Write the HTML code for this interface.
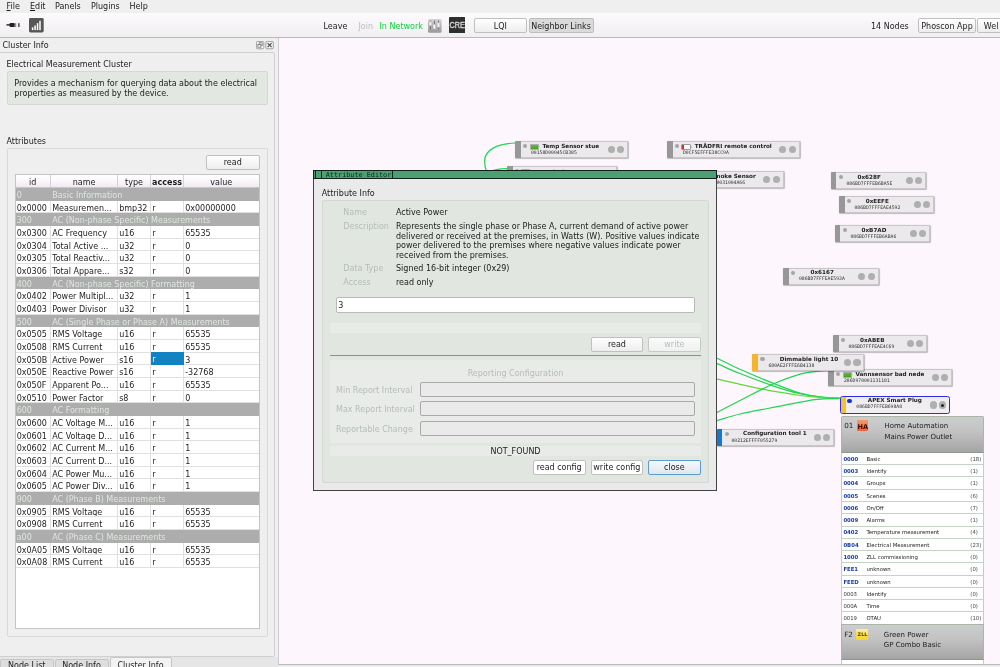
<!DOCTYPE html><html><head><meta charset="utf-8"><title>deCONZ</title><style>
*{box-sizing:border-box;margin:0;padding:0}
html,body{width:1000px;height:667px;overflow:hidden;background:#efefef}
body{font-family:"DejaVu Sans","Liberation Sans",sans-serif;font-size:8px;color:#1c1c1c;position:relative;line-height:11.4px}
.a{position:absolute;white-space:nowrap}
u{text-decoration-thickness:0.7px;text-underline-offset:1px}
.menubar{left:0;top:0;width:1000px;height:13px;background:#efefef}
.toolbar{left:0;top:13px;width:1000px;height:24.5px;background:linear-gradient(#fcfafc,#f1eef1);border-bottom:1px solid #b9b9b9}
.btn{border:1px solid #c0c0c0;border-radius:2px;background:linear-gradient(#ffffff,#ededed);text-align:center}
.canvas{left:278.3px;top:38px;width:722px;height:626.6px;background:#fdf7fd;overflow:hidden;border-left:1px solid #cfcacf}
.dock{left:0;top:38px;width:278.5px;height:629px;background:#efefef}
.gb{border:1px solid #d9d9d9;border-radius:2px}
.desc{background:#e2e7e2;border:1px solid #d2d9d2;border-radius:2px}
.tbl{background:#fff;border:1px solid #c4c4c4}
.row{left:0;width:244px;height:12.67px}
.grp{background:#adadad;color:#dde7dd}
.cell{top:0;height:12.67px;line-height:15.4px;padding-left:1.2px;border-right:1px solid #e0e0e0;border-bottom:1px solid #e0e0e0;overflow:hidden}
.hdr{background:linear-gradient(#ffffff,#fbf8fb 45%,#f0eaf0);text-align:center;padding-left:0;border-right:1px solid #d8d0d8;border-bottom:1px solid #c8c8c8}
.node{height:17.3px;background:#ebe9eb;border:1px solid #c9c7c9;border-radius:1.5px;box-shadow:0.5px 0.5px 1px rgba(0,0,0,.25)}
.node .bar{position:absolute;left:-1px;top:-1px;bottom:-1px;width:5.9px;background:#979797;border-radius:1px 0 0 1px}
.node .nm{position:absolute;top:-0.5px;font-weight:bold;font-size:5.67px;line-height:8px;color:#222;white-space:nowrap}
.node .mac{position:absolute;top:7.9px;font-family:"DejaVu Sans Mono","Liberation Mono",monospace;font-size:4.76px;line-height:6px;color:#333;white-space:nowrap}
.node .dot{position:absolute;width:4.2px;height:4.2px;border-radius:50%;background:#a7aaa7;left:7.1px;top:2px}
.node .c{position:absolute;width:7.1px;height:7.1px;border-radius:50%;background:#adb0ad;top:4.2px}
.cl{font-size:5.35px;line-height:13.6px}
</style></head><body><div id="root" class="a" style="left:0;top:0;width:1000px;height:667px;will-change:transform;filter:blur(0.5px)">
<div class="a menubar">
<span class="a" style="left:6.5px;top:1px"><u>F</u>ile</span>
<span class="a" style="left:30px;top:1px"><u>E</u>dit</span>
<span class="a" style="left:55px;top:1px">Panels</span>
<span class="a" style="left:91px;top:1px">Plugins</span>
<span class="a" style="left:129.5px;top:1px">Help</span>
</div>
<div class="a toolbar">
<svg class="a" style="left:6px;top:8px" width="16" height="8" viewBox="0 0 16 8"><rect x="0.5" y="3.2" width="4" height="1.4" fill="#222"/><rect x="3.5" y="2" width="5" height="4" rx="1" fill="#222"/><rect x="8" y="2.6" width="2.2" height="0.9" fill="#222"/><rect x="8" y="4.6" width="2.2" height="0.9" fill="#222"/><rect x="12.3" y="2.2" width="1.2" height="3.8" fill="#222"/></svg>
<svg class="a" style="left:29.2px;top:5.4px" width="14.7" height="14.5" viewBox="0 0 15.5 15.5" preserveAspectRatio="none"><rect x="0" y="0" width="15.5" height="15.5" rx="1.5" fill="#565656"/><rect x="3" y="10" width="1.6" height="3" fill="#fff"/><rect x="5.6" y="8" width="1.6" height="5" fill="#fff"/><rect x="8.2" y="5.5" width="1.6" height="7.5" fill="#fff"/><rect x="10.8" y="3" width="1.6" height="10" fill="#fff"/></svg>
<span class="a" style="left:323.5px;top:7.5px">Leave</span>
<span class="a" style="left:358.5px;top:7.5px;color:#b9bdb9">Join</span>
<span class="a" style="left:379.5px;top:7.5px;color:#0fcf3f">In Network</span>
<svg class="a" style="left:428px;top:6px" width="13.6" height="13.8" viewBox="0 0 13.6 13.8"><defs><linearGradient id="sg" x1="0" y1="0" x2="0" y2="1"><stop offset="0" stop-color="#d6d6d6"/><stop offset="1" stop-color="#979797"/></linearGradient></defs><rect x="0" y="0" width="13.6" height="13.8" rx="1.5" fill="url(#sg)"/><g fill="#6a6a6a"><rect x="1.9" y="1.5" width="0.9" height="9"/><rect x="5.9" y="1.5" width="0.9" height="9"/><rect x="10" y="1.5" width="0.9" height="9"/></g><g fill="#f6f6f6" stroke="#8a8a8a" stroke-width=".3"><rect x="1.1" y="2.4" width="2.5" height="4.4" rx="1"/><rect x="5.1" y="5.2" width="2.5" height="5" rx="1"/><rect x="9.2" y="3.6" width="2.5" height="5" rx="1"/></g></svg>
<svg class="a" style="left:448.5px;top:4px" width="16.3" height="16.2" viewBox="0 0 16.3 16.2"><rect width="16.3" height="16.2" rx="1" fill="#2e302e"/><text x="8.15" y="9.6" text-anchor="middle" font-family="Liberation Sans, sans-serif" font-size="7.3" transform="scale(1,1.18)" fill="#d6d6d6" stroke="#d6d6d6" stroke-width=".3">CRE</text></svg>
<div class="a btn" style="left:474px;top:5px;width:52.5px;height:14.5px;line-height:15.6px">LQI</div>
<div class="a btn" style="left:528.5px;top:5px;width:65px;height:14.5px;line-height:15.6px;background:#dadada;border-color:#bdbdbd">Neighbor Links</div>
<span class="a" style="left:871px;top:7.5px">14 Nodes</span>
<div class="a btn" style="left:918px;top:5px;width:58px;height:14.5px;line-height:15.6px">Phoscon App</div>
<div class="a btn" style="left:976.8px;top:5px;width:40px;height:14.5px;line-height:15.6px;text-align:left;padding-left:6px">Wel</div>
</div>
<div class="a dock">
<span class="a" style="left:2.5px;top:2px">Cluster Info</span>
<svg class="a" style="left:256px;top:3px" width="18" height="8.5" viewBox="0 0 18 8.5"><rect x="0.4" y="0.4" width="7.4" height="7.4" rx="1.2" fill="#f4f4f4" stroke="#8a8a8a" stroke-width=".8"/><rect x="3.2" y="1.8" width="3" height="2.6" fill="none" stroke="#666" stroke-width=".7"/><rect x="1.9" y="3.6" width="3" height="2.6" fill="#f4f4f4" stroke="#666" stroke-width=".7"/><rect x="9.9" y="0.4" width="7.4" height="7.4" rx="1.2" fill="#f4f4f4" stroke="#8a8a8a" stroke-width=".8"/><path d="M11.6 2.1l4 4M15.6 2.1l-4 4" stroke="#555" stroke-width="1.3"/></svg>
<div class="a" style="left:0;top:13.5px;width:274.5px;height:605.5px;border:1px solid #d0d0d0;border-left:none;background:#efefef;border-radius:0 2px 2px 0"></div>
<span class="a" style="left:6.5px;top:20.5px">Electrical Measurement Cluster</span>
<div class="a desc" style="left:7px;top:33px;width:260.5px;height:34px"></div>
<span class="a" style="left:14.3px;top:41.3px;white-space:normal;width:250px;line-height:9.5px">Provides a mechanism for querying data about the electrical<br>properties as measured by the device.</span>
<span class="a" style="left:6.5px;top:97.5px">Attributes</span>
<div class="a gb" style="left:7px;top:109.5px;width:260.5px;height:489.5px"></div>
<div class="a btn" style="left:206px;top:116.7px;width:53.5px;height:15px;line-height:14.3px">read</div>
<div class="a tbl" style="left:14.5px;top:136px;width:245.5px;height:455px;overflow:hidden">
<div class="a row" style="top:0;height:13px">
<div class="a cell hdr" style="left:0px;width:35.5px;height:13px">id</div>
<div class="a cell hdr" style="left:35.5px;width:67px;height:13px">name</div>
<div class="a cell hdr" style="left:102.5px;width:33px;height:13px">type</div>
<div class="a cell hdr" style="left:135.5px;width:33px;height:13px"><b>access</b></div>
<div class="a cell hdr" style="left:168.5px;width:75.5px;height:13px">value</div>
</div>
<div class="a row grp" style="top:12.9px"><span class="a" style="left:1.2px;line-height:15.4px">0</span><span class="a" style="left:36.7px;line-height:15.4px">Basic Information</span></div>
<div class="a row" style="top:25.57px">
<div class="a cell" style="left:0px;width:35.5px">0x0000</div>
<div class="a cell" style="left:35.5px;width:67px">Measuremen...</div>
<div class="a cell" style="left:102.5px;width:33px">bmp32</div>
<div class="a cell" style="left:135.5px;width:33px">r</div>
<div class="a cell" style="left:168.5px;width:75.5px">0x00000000</div>
</div>
<div class="a row grp" style="top:38.23px"><span class="a" style="left:1.2px;line-height:15.4px">300</span><span class="a" style="left:36.7px;line-height:15.4px">AC (Non-phase Specific) Measurements</span></div>
<div class="a row" style="top:50.9px">
<div class="a cell" style="left:0px;width:35.5px">0x0300</div>
<div class="a cell" style="left:35.5px;width:67px">AC Frequency</div>
<div class="a cell" style="left:102.5px;width:33px">u16</div>
<div class="a cell" style="left:135.5px;width:33px">r</div>
<div class="a cell" style="left:168.5px;width:75.5px">65535</div>
</div>
<div class="a row" style="top:63.57px">
<div class="a cell" style="left:0px;width:35.5px">0x0304</div>
<div class="a cell" style="left:35.5px;width:67px">Total Active ...</div>
<div class="a cell" style="left:102.5px;width:33px">u32</div>
<div class="a cell" style="left:135.5px;width:33px">r</div>
<div class="a cell" style="left:168.5px;width:75.5px">0</div>
</div>
<div class="a row" style="top:76.23px">
<div class="a cell" style="left:0px;width:35.5px">0x0305</div>
<div class="a cell" style="left:35.5px;width:67px">Total Reactiv...</div>
<div class="a cell" style="left:102.5px;width:33px">u32</div>
<div class="a cell" style="left:135.5px;width:33px">r</div>
<div class="a cell" style="left:168.5px;width:75.5px">0</div>
</div>
<div class="a row" style="top:88.9px">
<div class="a cell" style="left:0px;width:35.5px">0x0306</div>
<div class="a cell" style="left:35.5px;width:67px">Total Appare...</div>
<div class="a cell" style="left:102.5px;width:33px">s32</div>
<div class="a cell" style="left:135.5px;width:33px">r</div>
<div class="a cell" style="left:168.5px;width:75.5px">0</div>
</div>
<div class="a row grp" style="top:101.57px"><span class="a" style="left:1.2px;line-height:15.4px">400</span><span class="a" style="left:36.7px;line-height:15.4px">AC (Non-phase Specific) Formatting</span></div>
<div class="a row" style="top:114.24px">
<div class="a cell" style="left:0px;width:35.5px">0x0402</div>
<div class="a cell" style="left:35.5px;width:67px">Power Multipl...</div>
<div class="a cell" style="left:102.5px;width:33px">u32</div>
<div class="a cell" style="left:135.5px;width:33px">r</div>
<div class="a cell" style="left:168.5px;width:75.5px">1</div>
</div>
<div class="a row" style="top:126.9px">
<div class="a cell" style="left:0px;width:35.5px">0x0403</div>
<div class="a cell" style="left:35.5px;width:67px">Power Divisor</div>
<div class="a cell" style="left:102.5px;width:33px">u32</div>
<div class="a cell" style="left:135.5px;width:33px">r</div>
<div class="a cell" style="left:168.5px;width:75.5px">1</div>
</div>
<div class="a row grp" style="top:139.57px"><span class="a" style="left:1.2px;line-height:15.4px">500</span><span class="a" style="left:36.7px;line-height:15.4px">AC (Single Phase or Phase A) Measurements</span></div>
<div class="a row" style="top:152.24px">
<div class="a cell" style="left:0px;width:35.5px">0x0505</div>
<div class="a cell" style="left:35.5px;width:67px">RMS Voltage</div>
<div class="a cell" style="left:102.5px;width:33px">u16</div>
<div class="a cell" style="left:135.5px;width:33px">r</div>
<div class="a cell" style="left:168.5px;width:75.5px">65535</div>
</div>
<div class="a row" style="top:164.9px">
<div class="a cell" style="left:0px;width:35.5px">0x0508</div>
<div class="a cell" style="left:35.5px;width:67px">RMS Current</div>
<div class="a cell" style="left:102.5px;width:33px">u16</div>
<div class="a cell" style="left:135.5px;width:33px">r</div>
<div class="a cell" style="left:168.5px;width:75.5px">65535</div>
</div>
<div class="a row" style="top:177.57px">
<div class="a cell" style="left:0px;width:35.5px">0x050B</div>
<div class="a cell" style="left:35.5px;width:67px">Active Power</div>
<div class="a cell" style="left:102.5px;width:33px">s16</div>
<div class="a cell" style="left:135.5px;width:33px;background:#1183c0;color:#fff;border-color:#1183c0;margin-top:-0.6px;height:13.3px;line-height:16.6px">r</div>
<div class="a cell" style="left:168.5px;width:75.5px">3</div>
</div>
<div class="a row" style="top:190.24px">
<div class="a cell" style="left:0px;width:35.5px">0x050E</div>
<div class="a cell" style="left:35.5px;width:67px">Reactive Power</div>
<div class="a cell" style="left:102.5px;width:33px">s16</div>
<div class="a cell" style="left:135.5px;width:33px">r</div>
<div class="a cell" style="left:168.5px;width:75.5px">-32768</div>
</div>
<div class="a row" style="top:202.91px">
<div class="a cell" style="left:0px;width:35.5px">0x050F</div>
<div class="a cell" style="left:35.5px;width:67px">Apparent Po...</div>
<div class="a cell" style="left:102.5px;width:33px">u16</div>
<div class="a cell" style="left:135.5px;width:33px">r</div>
<div class="a cell" style="left:168.5px;width:75.5px">65535</div>
</div>
<div class="a row" style="top:215.57px">
<div class="a cell" style="left:0px;width:35.5px">0x0510</div>
<div class="a cell" style="left:35.5px;width:67px">Power Factor</div>
<div class="a cell" style="left:102.5px;width:33px">s8</div>
<div class="a cell" style="left:135.5px;width:33px">r</div>
<div class="a cell" style="left:168.5px;width:75.5px">0</div>
</div>
<div class="a row grp" style="top:228.24px"><span class="a" style="left:1.2px;line-height:15.4px">600</span><span class="a" style="left:36.7px;line-height:15.4px">AC Formatting</span></div>
<div class="a row" style="top:240.91px">
<div class="a cell" style="left:0px;width:35.5px">0x0600</div>
<div class="a cell" style="left:35.5px;width:67px">AC Voltage M...</div>
<div class="a cell" style="left:102.5px;width:33px">u16</div>
<div class="a cell" style="left:135.5px;width:33px">r</div>
<div class="a cell" style="left:168.5px;width:75.5px">1</div>
</div>
<div class="a row" style="top:253.57px">
<div class="a cell" style="left:0px;width:35.5px">0x0601</div>
<div class="a cell" style="left:35.5px;width:67px">AC Voltage D...</div>
<div class="a cell" style="left:102.5px;width:33px">u16</div>
<div class="a cell" style="left:135.5px;width:33px">r</div>
<div class="a cell" style="left:168.5px;width:75.5px">1</div>
</div>
<div class="a row" style="top:266.24px">
<div class="a cell" style="left:0px;width:35.5px">0x0602</div>
<div class="a cell" style="left:35.5px;width:67px">AC Current M...</div>
<div class="a cell" style="left:102.5px;width:33px">u16</div>
<div class="a cell" style="left:135.5px;width:33px">r</div>
<div class="a cell" style="left:168.5px;width:75.5px">1</div>
</div>
<div class="a row" style="top:278.91px">
<div class="a cell" style="left:0px;width:35.5px">0x0603</div>
<div class="a cell" style="left:35.5px;width:67px">AC Current D...</div>
<div class="a cell" style="left:102.5px;width:33px">u16</div>
<div class="a cell" style="left:135.5px;width:33px">r</div>
<div class="a cell" style="left:168.5px;width:75.5px">1</div>
</div>
<div class="a row" style="top:291.57px">
<div class="a cell" style="left:0px;width:35.5px">0x0604</div>
<div class="a cell" style="left:35.5px;width:67px">AC Power Mu...</div>
<div class="a cell" style="left:102.5px;width:33px">u16</div>
<div class="a cell" style="left:135.5px;width:33px">r</div>
<div class="a cell" style="left:168.5px;width:75.5px">1</div>
</div>
<div class="a row" style="top:304.24px">
<div class="a cell" style="left:0px;width:35.5px">0x0605</div>
<div class="a cell" style="left:35.5px;width:67px">AC Power Div...</div>
<div class="a cell" style="left:102.5px;width:33px">u16</div>
<div class="a cell" style="left:135.5px;width:33px">r</div>
<div class="a cell" style="left:168.5px;width:75.5px">1</div>
</div>
<div class="a row grp" style="top:316.91px"><span class="a" style="left:1.2px;line-height:15.4px">900</span><span class="a" style="left:36.7px;line-height:15.4px">AC (Phase B) Measurements</span></div>
<div class="a row" style="top:329.57px">
<div class="a cell" style="left:0px;width:35.5px">0x0905</div>
<div class="a cell" style="left:35.5px;width:67px">RMS Voltage</div>
<div class="a cell" style="left:102.5px;width:33px">u16</div>
<div class="a cell" style="left:135.5px;width:33px">r</div>
<div class="a cell" style="left:168.5px;width:75.5px">65535</div>
</div>
<div class="a row" style="top:342.24px">
<div class="a cell" style="left:0px;width:35.5px">0x0908</div>
<div class="a cell" style="left:35.5px;width:67px">RMS Current</div>
<div class="a cell" style="left:102.5px;width:33px">u16</div>
<div class="a cell" style="left:135.5px;width:33px">r</div>
<div class="a cell" style="left:168.5px;width:75.5px">65535</div>
</div>
<div class="a row grp" style="top:354.91px"><span class="a" style="left:1.2px;line-height:15.4px">a00</span><span class="a" style="left:36.7px;line-height:15.4px">AC (Phase C) Measurements</span></div>
<div class="a row" style="top:367.58px">
<div class="a cell" style="left:0px;width:35.5px">0x0A05</div>
<div class="a cell" style="left:35.5px;width:67px">RMS Voltage</div>
<div class="a cell" style="left:102.5px;width:33px">u16</div>
<div class="a cell" style="left:135.5px;width:33px">r</div>
<div class="a cell" style="left:168.5px;width:75.5px">65535</div>
</div>
<div class="a row" style="top:380.24px">
<div class="a cell" style="left:0px;width:35.5px">0x0A08</div>
<div class="a cell" style="left:35.5px;width:67px">RMS Current</div>
<div class="a cell" style="left:102.5px;width:33px">u16</div>
<div class="a cell" style="left:135.5px;width:33px">r</div>
<div class="a cell" style="left:168.5px;width:75.5px">65535</div>
</div>
</div>
<div class="a" style="left:0;top:619px;width:278.5px;height:10px;background:#e6e6e6"></div>
<div class="a" style="left:0px;top:620.6px;width:53.5px;height:14px;background:#dedede;border:1px solid #c6c6c6;border-radius:2px 2px 0 0;text-align:center;line-height:12.6px">Node List</div>
<div class="a" style="left:54.5px;top:620.6px;width:54px;height:14px;background:#dedede;border:1px solid #c6c6c6;border-radius:2px 2px 0 0;text-align:center;line-height:12.6px">Node Info</div>
<div class="a" style="left:109.5px;top:619px;width:62px;height:14px;background:#f3f3f3;border:1px solid #c6c6c6;border-radius:2px 2px 0 0;text-align:center;line-height:15.5px">Cluster Info</div>
</div>
<div class="a canvas" id="cv">
<div class="a" style="left:-279.3px;top:-38px;width:1000px;height:667px">
<svg class="a" style="left:0;top:0" width="1000" height="667" viewBox="0 0 1000 667" fill="none" stroke="#1fd650" stroke-width="1.25" stroke-linecap="round">
<path d="M515.5 143 C497 143.6 484.6 150 484.6 161 C484.6 165 485.2 168.5 486.8 172"/>
<path d="M507 168.6 C501 168.7 495 169.4 490 171.5"/>
<path d="M700 350.5 C702.8 351.8 710.3 355.1 717 358.2 C723.7 361.3 730.7 365.1 740 369.3 C749.3 373.5 763.0 379.2 773 383.2 C783.0 387.1 791.8 390.7 800 393 C808.2 395.3 815.8 396.3 822.5 397.2 C829.2 398.1 837.5 398.1 840.5 398.3"/>
<path d="M700 356.8 C702.8 357.9 710.3 360.9 717 363.7 C723.7 366.5 730.7 369.8 740 373.5 C749.3 377.2 763.0 382.4 773 385.8 C783.0 389.2 791.8 391.8 800 393.7 C808.2 395.6 815.8 396.6 822.5 397.4 C829.2 398.2 837.5 398.1 840.5 398.3"/>
<path d="M700 376 C702.8 376.5 710.3 377.8 717 379.2 C723.7 380.6 732.4 382.6 740 384.3 C747.6 386.0 752.5 387.3 762.5 389.2 C772.5 391.1 790.0 394.1 800 395.5 C810.0 396.9 815.8 397.2 822.5 397.7 C829.2 398.2 837.5 398.2 840.5 398.3" stroke="#62d83a"/>
<path d="M700 422 C702.8 420.4 710.3 416.1 717 412.5 C723.7 408.9 730.7 405.2 740 400.5 C749.3 395.8 763.0 388.4 773 384 C783.0 379.6 793.0 376.3 800 374.2 C807.0 372.1 810.2 372.2 815 371.6 C819.8 371.0 826.7 370.7 829 370.5"/>
<path d="M700 426 C702.8 425.1 710.3 422.7 717 420.7 C723.7 418.7 731.2 416.1 740 414 C748.8 411.9 757.5 410.4 770 408 C782.5 405.6 803.2 401.2 815 399.6 C826.8 398.0 836.2 398.7 840.5 398.5"/>
</svg>
<div class="a node" style="left:506.7px;top:166.2px;width:110px">
<div class="bar" style="background:#979797"></div>
<div class="dot" style="background:#a5a5a5"></div>
<div style="position:absolute;left:13.6px;top:1.8px;width:9.2px;height:5.8px;background:linear-gradient(#64ba3a,#46a022);border:0.4px solid #a8b4a8;border-radius:.8px"></div><div style="position:absolute;left:22.6px;top:3.4px;width:1.4px;height:2.2px;background:#d8dcd8"></div>
<div class="nm" style="left:26.3px;margin-top:1.4px">Heat desk</div>
<div class="mac" style="left:15.3px;margin-top:1.4px">00158D00045CB1F2</div>
<div class="c" style="left:88.8px"></div><div class="c" style="left:98.1px"></div>
</div>
<div class="a node" style="left:515px;top:141.2px;width:113.2px">
<div class="bar" style="background:#979797"></div>
<div class="dot" style="background:#a5a5a5"></div>
<div style="position:absolute;left:13.6px;top:1.8px;width:9.2px;height:5.8px;background:linear-gradient(#64ba3a,#46a022);border:0.4px solid #a8b4a8;border-radius:.8px"></div><div style="position:absolute;left:22.6px;top:3.4px;width:1.4px;height:2.2px;background:#d8dcd8"></div>
<div class="nm" style="left:26.4px">Temp Sensor stue</div>
<div class="mac" style="left:15px">00158D00045CB385</div>
<div class="c" style="left:92.0px"></div><div class="c" style="left:101.3px"></div>
</div>
<div class="a node" style="left:666.8px;top:141.2px;width:132.8px">
<div class="bar" style="background:#979797"></div>
<div class="dot" style="background:#a5a5a5"></div>
<div style="position:absolute;left:13.7px;top:2px;width:9.2px;height:5.4px;background:linear-gradient(90deg,#e02a1a 0,#e02a1a 26%,#fbfafb 26%);border:0.6px solid #9a9a9a;border-radius:1px"></div><div style="position:absolute;left:22.9px;top:3.6px;width:1.6px;height:2.2px;background:#c4c4c4"></div>
<div class="nm" style="left:26.9px">TRÅDFRI remote control</div>
<div class="mac" style="left:15.2px">D0CF5EFFFE38CC9A</div>
<div class="c" style="left:111.6px"></div><div class="c" style="left:120.9px"></div>
</div>
<div class="a node" style="left:680px;top:171px;width:103.6px">
<div class="bar" style="background:#979797"></div>
<div class="dot" style="background:#a5a5a5"></div>
<div class="nm" style="left:29.5px">Smoke Sensor</div>
<div class="mac" style="left:18.3px">00158D0031004A66</div>
<div class="c" style="left:82.4px"></div><div class="c" style="left:91.7px"></div>
</div>
<div class="a node" style="left:830.6px;top:172px;width:95.2px">
<div class="bar" style="background:#979797"></div>
<div class="dot" style="background:#a5a5a5"></div>
<div class="nm" style="left:25.9px">0x628F</div>
<div class="mac" style="left:14.9px">086BD7FFFEB6BA5E</div>
<div class="c" style="left:74.0px"></div><div class="c" style="left:83.3px"></div>
</div>
<div class="a node" style="left:838.7px;top:196px;width:95.2px">
<div class="bar" style="background:#979797"></div>
<div class="dot" style="background:#a5a5a5"></div>
<div class="nm" style="left:26.1px">0xEEFE</div>
<div class="mac" style="left:14.8px">086BD7FFFEAE4592</div>
<div class="c" style="left:74.0px"></div><div class="c" style="left:83.3px"></div>
</div>
<div class="a node" style="left:834.5px;top:225px;width:95.2px">
<div class="bar" style="background:#979797"></div>
<div class="dot" style="background:#a5a5a5"></div>
<div class="nm" style="left:26.0px">0xB7AD</div>
<div class="mac" style="left:15.0px">086BD7FFFEB6ABA6</div>
<div class="c" style="left:74.0px"></div><div class="c" style="left:83.3px"></div>
</div>
<div class="a node" style="left:783px;top:267.5px;width:95.6px">
<div class="bar" style="background:#979797"></div>
<div class="dot" style="background:#a5a5a5"></div>
<div class="nm" style="left:26.5px">0x6167</div>
<div class="mac" style="left:15px">086BD7FFFEAE593A</div>
<div class="c" style="left:74.4px"></div><div class="c" style="left:83.7px"></div>
</div>
<div class="a node" style="left:833px;top:335px;width:94.2px">
<div class="bar" style="background:#979797"></div>
<div class="dot" style="background:#a5a5a5"></div>
<div class="nm" style="left:26px">0xABEB</div>
<div class="mac" style="left:14.5px">086BD7FFFEAE4C69</div>
<div class="c" style="left:73.0px"></div><div class="c" style="left:82.3px"></div>
</div>
<div class="a node" style="left:828.1px;top:369px;width:124px">
<div class="bar" style="background:#979797"></div>
<div class="dot" style="background:#a5a5a5"></div>
<div style="position:absolute;left:13.6px;top:1.8px;width:9.2px;height:5.8px;background:linear-gradient(#64ba3a,#46a022);border:0.4px solid #a8b4a8;border-radius:.8px"></div><div style="position:absolute;left:22.6px;top:3.4px;width:1.4px;height:2.2px;background:#d8dcd8"></div>
<div class="nm" style="left:26.4px">Vannsensor bad nede</div>
<div class="mac" style="left:14.9px">286D970001131181</div>
<div class="c" style="left:102.8px"></div><div class="c" style="left:112.1px"></div>
</div>
<div class="a node" style="left:752.4px;top:354px;width:112px">
<div class="bar" style="background:#f6b32c"></div>
<div class="dot" style="background:#a5a5a5"></div>
<div class="nm" style="left:26.3px">Dimmable light 10</div>
<div class="mac" style="left:15.1px">680AE2FFFE6B4138</div>
<div class="c" style="left:90.8px"></div><div class="c" style="left:100.1px"></div>
</div>
<div class="a node" style="left:716.6px;top:428.8px;width:117.6px">
<div class="bar" style="background:#1478d2"></div>
<div class="dot" style="background:#a5a5a5"></div>
<div class="nm" style="left:25.4px">Configuration tool 1</div>
<div class="mac" style="left:13.9px">00212EFFFF055279</div>
<div class="c" style="left:96.4px"></div><div class="c" style="left:105.7px"></div>
</div>
<div class="a node" style="left:839.8px;top:396.3px;width:110px;border:1.3px solid #2c2ce6;border-radius:2.5px;background:#efedef;box-shadow:none;height:17.4px">
<div class="bar" style="background:#f8c22e;left:0.2px;top:0.2px;bottom:0.2px;width:5px;border-radius:1.5px 0 0 1.5px"></div>
<div class="dot" style="background:#1030d8;width:4.4px;height:4.4px;left:6.4px;top:1.8px"></div>
<div class="nm" style="left:27.0px;margin-top:-0.8px">APEX Smart Plug</div>
<div class="mac" style="left:15.5px;margin-top:-0.8px">086BD7FFFEB698A8</div>
<div class="c" style="left:88.8px"></div><div class="c" style="left:98.1px"><div style="position:absolute;left:2.2px;top:2.2px;width:3px;height:3px;border-radius:50%;background:#222"></div></div>
</div>
<div class="a" style="left:841.3px;top:416.4px;width:142.4px;height:36.6px;background:linear-gradient(#cdcdcd,#c3c3c3 40%,#a5a5a5);border:1px solid #a9b5a9;border-bottom-color:#8c988c;border-radius:2px 2px 0 0"></div>
<span class="a" style="left:844.2px;top:419.8px;font-size:7.2px">01</span>
<div class="a" style="left:856.6px;top:420.4px;width:11.5px;height:11px;background:linear-gradient(#f59a6a,#f0603c);border-radius:1px"></div>
<span class="a" style="left:857.6px;top:422px;font-size:6.6px;font-weight:bold;color:#3a0a00">HA</span>
<span class="a" style="left:884.5px;top:421.2px;font-size:7px">Home Automation</span>
<span class="a" style="left:884.5px;top:432px;font-size:7px">Mains Power Outlet</span>
<div class="a" style="left:841.3px;top:452.8px;width:142.4px;height:171.78px;background:#fff;border-left:1px solid #c3cfc3;border-right:1px solid #c3cfc3"></div>
<div class="a" style="left:841.3px;top:464.17px;width:142.4px;height:1px;background:#c6d2c6"></div>
<span class="a cl" style="left:843.4px;top:452.8px;font-weight:bold;color:#1c3f9e">0000</span><span class="a cl" style="left:866.4px;top:452.8px">Basic</span><span class="a cl" style="left:970.3px;top:452.8px;color:#444">(18)</span>
<div class="a" style="left:841.3px;top:476.44px;width:142.4px;height:1px;background:#c6d2c6"></div>
<span class="a cl" style="left:843.4px;top:465.07px;font-weight:bold;color:#1c3f9e">0003</span><span class="a cl" style="left:866.4px;top:465.07px">Identify</span><span class="a cl" style="left:970.3px;top:465.07px;color:#444">(1)</span>
<div class="a" style="left:841.3px;top:488.71px;width:142.4px;height:1px;background:#c6d2c6"></div>
<span class="a cl" style="left:843.4px;top:477.34px;font-weight:bold;color:#1c3f9e">0004</span><span class="a cl" style="left:866.4px;top:477.34px">Groups</span><span class="a cl" style="left:970.3px;top:477.34px;color:#444">(1)</span>
<div class="a" style="left:841.3px;top:500.98px;width:142.4px;height:1px;background:#c6d2c6"></div>
<span class="a cl" style="left:843.4px;top:489.61px;font-weight:bold;color:#1c3f9e">0005</span><span class="a cl" style="left:866.4px;top:489.61px">Scenes</span><span class="a cl" style="left:970.3px;top:489.61px;color:#444">(6)</span>
<div class="a" style="left:841.3px;top:513.25px;width:142.4px;height:1px;background:#c6d2c6"></div>
<span class="a cl" style="left:843.4px;top:501.88px;font-weight:bold;color:#1c3f9e">0006</span><span class="a cl" style="left:866.4px;top:501.88px">On/Off</span><span class="a cl" style="left:970.3px;top:501.88px;color:#444">(7)</span>
<div class="a" style="left:841.3px;top:525.52px;width:142.4px;height:1px;background:#c6d2c6"></div>
<span class="a cl" style="left:843.4px;top:514.15px;font-weight:bold;color:#1c3f9e">0009</span><span class="a cl" style="left:866.4px;top:514.15px">Alarms</span><span class="a cl" style="left:970.3px;top:514.15px;color:#444">(1)</span>
<div class="a" style="left:841.3px;top:537.79px;width:142.4px;height:1px;background:#c6d2c6"></div>
<span class="a cl" style="left:843.4px;top:526.42px;font-weight:bold;color:#1c3f9e">0402</span><span class="a cl" style="left:866.4px;top:526.42px">Temperature measurement</span><span class="a cl" style="left:970.3px;top:526.42px;color:#444">(4)</span>
<div class="a" style="left:841.3px;top:550.06px;width:142.4px;height:1px;background:#c6d2c6"></div>
<span class="a cl" style="left:843.4px;top:538.69px;font-weight:bold;color:#1c3f9e">0B04</span><span class="a cl" style="left:866.4px;top:538.69px">Electrical Measurement</span><span class="a cl" style="left:970.3px;top:538.69px;color:#444">(23)</span>
<div class="a" style="left:841.3px;top:562.33px;width:142.4px;height:1px;background:#c6d2c6"></div>
<span class="a cl" style="left:843.4px;top:550.96px;font-weight:bold;color:#1c3f9e">1000</span><span class="a cl" style="left:866.4px;top:550.96px">ZLL commissioning</span><span class="a cl" style="left:970.3px;top:550.96px;color:#444">(0)</span>
<div class="a" style="left:841.3px;top:574.6px;width:142.4px;height:1px;background:#c6d2c6"></div>
<span class="a cl" style="left:843.4px;top:563.23px;font-weight:bold;color:#1c3f9e">FEE1</span><span class="a cl" style="left:866.4px;top:563.23px">unknown</span><span class="a cl" style="left:970.3px;top:563.23px;color:#444">(0)</span>
<div class="a" style="left:841.3px;top:586.87px;width:142.4px;height:1px;background:#c6d2c6"></div>
<span class="a cl" style="left:843.4px;top:575.5px;font-weight:bold;color:#1c3f9e">FEED</span><span class="a cl" style="left:866.4px;top:575.5px">unknown</span><span class="a cl" style="left:970.3px;top:575.5px;color:#444">(0)</span>
<div class="a" style="left:841.3px;top:599.14px;width:142.4px;height:1px;background:#c6d2c6"></div>
<span class="a cl" style="left:843.4px;top:587.77px;color:#333">0003</span><span class="a cl" style="left:866.4px;top:587.77px">Identify</span><span class="a cl" style="left:970.3px;top:587.77px;color:#444">(0)</span>
<div class="a" style="left:841.3px;top:611.41px;width:142.4px;height:1px;background:#c6d2c6"></div>
<span class="a cl" style="left:843.4px;top:600.04px;color:#333">000A</span><span class="a cl" style="left:866.4px;top:600.04px">Time</span><span class="a cl" style="left:970.3px;top:600.04px;color:#444">(0)</span>
<div class="a" style="left:841.3px;top:623.68px;width:142.4px;height:1px;background:#c6d2c6"></div>
<span class="a cl" style="left:843.4px;top:612.31px;color:#333">0019</span><span class="a cl" style="left:866.4px;top:612.31px">OTAU</span><span class="a cl" style="left:970.3px;top:612.31px;color:#444">(10)</span>
<div class="a" style="left:841.3px;top:624.4px;width:142.4px;height:36px;background:linear-gradient(#cdcdcd,#c3c3c3 40%,#a5a5a5);border:1px solid #a9b5a9;border-bottom-color:#8c988c"></div>
<div class="a" style="left:841.3px;top:660.4px;width:142.4px;height:6px;background:#fff;border-left:1px solid #c3cfc3;border-right:1px solid #c3cfc3"></div>
<span class="a" style="left:844.2px;top:628.6px;font-size:7.2px">F2</span>
<div class="a" style="left:856.4px;top:628.8px;width:11.8px;height:11.2px;background:linear-gradient(#fdf0a4,#fbdc3c 60%,#fad42c);border-radius:1px"></div>
<span class="a" style="left:857.6px;top:629.1px;font-size:4.9px;font-weight:bold;color:#4a4010">ZLL</span>
<span class="a" style="left:883.8px;top:629.6px;font-size:7px">Green Power</span>
<span class="a" style="left:883.8px;top:639.9px;font-size:7px">GP Combo Basic</span>
</div>
</div>
<div class="a" style="left:278.5px;top:664.4px;width:722px;height:3px;background:#ececec;border-top:1px solid #b8b8b8"></div>
<div class="a" style="left:313.4px;top:169.8px;width:403.6px;height:320.8px;background:#eaeaea;border:1.3px solid #444">
<div class="a" style="left:-1.3px;top:-1.3px;width:403.6px;height:9.9px;background:#4c9f72;border:1.6px solid #10201a;border-left-width:1.3px;border-right-width:1.3px"></div>
<div class="a" style="left:1.1px;top:0;width:0.9px;height:7px;background:#10201a"></div>
<div class="a" style="left:6.5px;top:0;width:0.9px;height:7px;background:#10201a"></div>
<div class="a" style="left:77.4px;top:0;width:0.9px;height:7px;background:#10201a"></div>
<span class="a" style="left:11.4px;top:-1.2px;font-family:'DejaVu Sans Mono','Liberation Mono',monospace;font-size:6.8px;color:#0a2416;letter-spacing:0">Attribute Editor</span>
</div>
<span class="a" style="left:321.7px;top:187.6px;">Attribute Info</span>
<div class="a" style="left:322.4px;top:200.4px;width:386.2px;height:282.2px;background:#e1e6e1;border:1px solid #d3d8d3;border-radius:2px"></div>
<span class="a" style="left:343.3px;top:206.8px;color:#b5bdb5">Name</span>
<span class="a" style="left:396px;top:206.8px;">Active Power</span>
<span class="a" style="left:343.3px;top:221.2px;color:#b5bdb5">Description</span>
<span class="a" style="left:396px;top:222.2px;line-height:9.45px;white-space:nowrap">Represents the single phase or Phase A, current demand of active power<br>delivered or received at the premises, in Watts (W). Positive values indicate<br>power delivered to the premises where negative values indicate power<br>received from the premises.</span>
<span class="a" style="left:343.3px;top:263.2px;color:#b5bdb5">Data Type</span>
<span class="a" style="left:396px;top:263.2px;">Signed 16-bit integer (0x29)</span>
<span class="a" style="left:343.3px;top:277.2px;color:#b5bdb5">Access</span>
<span class="a" style="left:396px;top:277.2px;">read only</span>
<div class="a" style="left:336px;top:297px;width:358.6px;height:15.6px;background:#fff;border:1px solid #b9b9b9;border-radius:2px"></div>
<span class="a" style="left:338.2px;top:300.3px;">3</span>
<div class="a" style="left:330px;top:323px;width:371px;height:9.6px;background:#e9ebe9"></div>
<div class="a btn" style="left:590.6px;top:336.6px;width:52.6px;height:15px;line-height:14.3px">read</div>
<div class="a btn" style="left:648.1px;top:336.6px;width:52.6px;height:15px;line-height:14.3px;color:#b5bdb5;background:linear-gradient(#fbfbfb,#f0f0f0);border-color:#c8c8c8">write</div>
<div class="a" style="left:330px;top:354.6px;width:371px;height:1px;background:#8f8f8f"></div>
<div class="a" style="left:330px;top:360px;width:371px;height:82.5px;background:#e8ebe8"></div>
<span class="a" style="left:330px;top:368.2px;width:371px;text-align:center;color:#b5bdb5">Reporting Configuration</span>
<span class="a" style="left:336px;top:384.70000000000005px;color:#b5bdb5">Min Report Interval</span>
<div class="a" style="left:419.5px;top:381.6px;width:275.4px;height:15px;background:#e9eae9;border:1px solid #a9a9a9;border-radius:2px"></div>
<span class="a" style="left:336px;top:404.1px;color:#b5bdb5">Max Report Interval</span>
<div class="a" style="left:419.5px;top:401px;width:275.4px;height:15px;background:#e9eae9;border:1px solid #a9a9a9;border-radius:2px"></div>
<span class="a" style="left:336px;top:423.70000000000005px;color:#b5bdb5">Reportable Change</span>
<div class="a" style="left:419.5px;top:420.6px;width:275.4px;height:15px;background:#e9eae9;border:1px solid #a9a9a9;border-radius:2px"></div>
<div class="a" style="left:330px;top:445.5px;width:371px;height:10.6px;background:#e8ebe8"></div>
<span class="a" style="left:330px;top:446.4px;width:371px;text-align:center">NOT_FOUND</span>
<div class="a btn" style="left:532.6px;top:459.6px;width:53.2px;height:15px;line-height:14.3px;background:#fff">read config</div>
<div class="a btn" style="left:590.6px;top:459.6px;width:52.6px;height:15px;line-height:14.3px;background:#fff">write config</div>
<div class="a btn" style="left:648.1px;top:459.6px;width:52.6px;height:15px;line-height:14.3px;background:linear-gradient(#f4f8fb,#dfe8ef);border-color:#5a9ccb">close</div>
</div></body></html>
